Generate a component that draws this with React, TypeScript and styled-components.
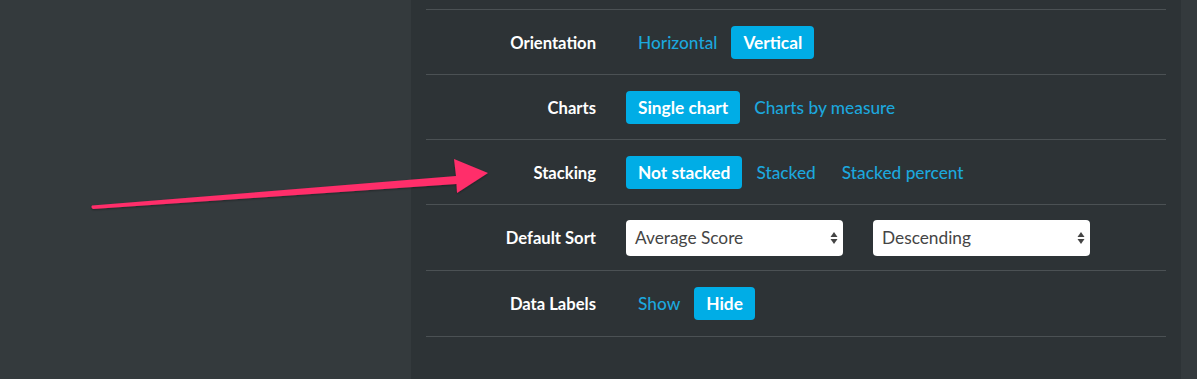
import React from "react";
import styled, { createGlobalStyle } from "styled-components";

const GlobalStyle = createGlobalStyle`
  html, body {
    margin: 0;
    padding: 0;
    background: #343a3d;
  }
  body {
    font-family: Lato, "Liberation Sans", sans-serif;
  }
`;

const Page = styled.div`
  position: relative;
  display: flex;
  width: 1197px;
  height: 379px;
  overflow: hidden;
  background: #343a3d;
`;

const Gutter = styled.div<{ $width: number }>`
  width: ${(p) => p.$width}px;
  flex-shrink: 0;
`;

const Panel = styled.div`
  flex: 1;
  background: #2d3336;
  padding: 9px 15px 0;
`;

const Rows = styled.div`
  border-top: 1px solid #4b5154;
`;

const Row = styled.div<{ $height?: number }>`
  display: grid;
  grid-template-columns: 170px 1fr;
  column-gap: 30px;
  align-items: center;
  height: ${(p) => p.$height ?? 64}px;
  border-bottom: 1px solid #4b5154;
`;

const Label = styled.div`
  text-align: right;
  color: #ffffff;
  font-weight: 700;
  font-size: 16.6px;
  padding-top: 1px;
`;

const Options = styled.div`
  display: flex;
  align-items: center;
  gap: 2px;
`;

const Option = styled.button<{ $active?: boolean }>`
  height: 33px;
  padding: 0 12px;
  border: none;
  border-radius: 4px;
  font-family: Lato, "Liberation Sans", sans-serif;
  font-size: 17.3px;
  font-weight: ${(p) => (p.$active ? 700 : 500)};
  background: ${(p) => (p.$active ? "#00ade6" : "transparent")};
  color: ${(p) => (p.$active ? "#ffffff" : "#1ca7dd")};
  cursor: pointer;
`;

const Selects = styled.div`
  display: flex;
  align-items: center;
  gap: 30px;
`;

const SelectBox = styled.div`
  position: relative;
  width: 217px;
  height: 36px;
  background: #ffffff;
  border-radius: 4px;
  display: flex;
  align-items: center;
  padding: 0 9px;
  box-sizing: border-box;
  color: #454545;
  font-size: 17.3px;
`;

const Caret = styled.svg`
  position: absolute;
  right: 5px;
  top: 50%;
  transform: translateY(-50%);
`;

const Arrow = styled.svg`
  position: absolute;
  left: 0;
  top: 0;
  pointer-events: none;
`;

type Choice = { text: string; active?: boolean };

const toggleRows: { label: string; choices: Choice[] }[] = [
  {
    label: "Orientation",
    choices: [{ text: "Horizontal" }, { text: "Vertical", active: true }],
  },
  {
    label: "Charts",
    choices: [{ text: "Single chart", active: true }, { text: "Charts by measure" }],
  },
  {
    label: "Stacking",
    choices: [
      { text: "Not stacked", active: true },
      { text: "Stacked" },
      { text: "Stacked percent" },
    ],
  },
];

const Select: React.FC<{ value: string }> = ({ value }) => (
  <SelectBox>
    {value}
    <Caret width="8" height="14" viewBox="0 0 8 14">
      <path d="M4 1 L7.5 6 H0.5 Z" fill="#444" />
      <path d="M4 13 L7.5 8 H0.5 Z" fill="#444" />
    </Caret>
  </SelectBox>
);

const App: React.FC = () => (
  <>
    <GlobalStyle />
    <Page>
      <Gutter $width={411} />
      <Panel>
        <Rows>
          {toggleRows.map((row) => (
            <Row key={row.label}>
              <Label>{row.label}</Label>
              <Options>
                {row.choices.map((c) => (
                  <Option key={c.text} $active={c.active}>
                    {c.text}
                  </Option>
                ))}
              </Options>
            </Row>
          ))}
          <Row $height={65}>
            <Label>Default Sort</Label>
            <Selects>
              <Select value="Average Score" />
              <Select value="Descending" />
            </Selects>
          </Row>
          <Row $height={65}>
            <Label>Data Labels</Label>
            <Options>
              <Option>Show</Option>
              <Option $active>Hide</Option>
            </Options>
          </Row>
        </Rows>
      </Panel>
      <Gutter $width={16} />
      <Arrow width="1197" height="379" viewBox="0 0 1197 379">
        <defs>
          <filter id="shadow" x="-10%" y="-50%" width="120%" height="200%">
            <feDropShadow dx="0" dy="1" stdDeviation="1" floodColor="#000" floodOpacity="0.35" />
          </filter>
        </defs>
        <path
          d="M92 205.5 L456 176 L454 159 L488 173 L457 193 L456.5 184 L93 209 Q90.5 207.5 92 205.5 Z"
          fill="#ff2d6b"
          filter="url(#shadow)"
        />
      </Arrow>
    </Page>
  </>
);

export default App;
